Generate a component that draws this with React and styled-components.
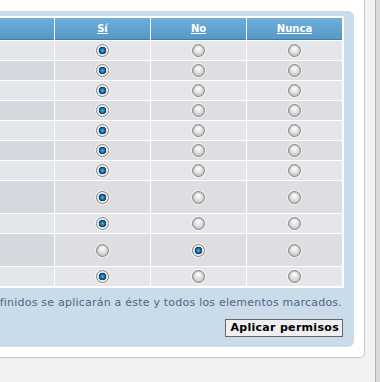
import React from "react";
import styled, { createGlobalStyle } from "styled-components";

const Global = createGlobalStyle`
  html, body { margin: 0; padding: 0; background: #f2f2f2; }
  body { font-family: "DejaVu Sans", Verdana, sans-serif; }
`;

const Page = styled.div`
  display: flex;
  width: 380px;
  height: 382px;
  overflow: hidden;
  background: #f2f2f2;
`;

const Main = styled.div`
  flex: 0 0 375px;
  min-width: 0;
  overflow: hidden;
  display: flex;
  justify-content: flex-end;
  align-items: flex-start;
  padding-right: 10px;
  box-sizing: border-box;
`;

const Edge = styled.div`
  flex: 1;
  border-left: 1px solid #b2b2b2;
  background: #d9d9d9;
`;

const Card = styled.div`
  flex: 0 0 700px;
  box-sizing: border-box;
  background: #ffffff;
  padding: 11px 10px 10px 0;
  border-right: 1px solid #c6c6c6;
  border-bottom: 1px solid #c6c6c6;
  border-bottom-right-radius: 5px;
`;

const Panel = styled.div`
  background: #cadbea;
  border-radius: 6px;
  padding: 5px 10px 10px 10px;
`;

const Table = styled.table`
  width: 100%;
  border-collapse: separate;
  border-spacing: 1px;
  border: 1px solid #ffffff;
  background: #ffffff;
  table-layout: fixed;
`;

const Th = styled.th`
  height: 21px;
  padding: 0;
  background: linear-gradient(#6eaed8, #5898c8);
  border-bottom: 1px solid #3f7cab;
  color: #ffffff;
  font-size: 10px;
  font-weight: bold;
  text-align: center;
  width: ${(p) => (p.$wide ? "auto" : "95px")};
`;

const HeadLink = styled.a`
  color: #ffffff;
  text-decoration: underline;
`;

const Label = styled.td`
  padding: 0;
  height: ${(p) => (p.$tall ? "32px" : "19px")};
  background: ${(p) => (p.$odd ? "#e4e7ea" : "#d4d9df")};
`;

const Cell = styled.td`
  padding: 0;
  text-align: center;
  vertical-align: middle;
  line-height: 0;
  background: ${(p) => (p.$odd ? "#e4e6e9" : "#dcdee1")};
`;

const Radio = styled.input.attrs({ type: "radio" })`
  appearance: none;
  -webkit-appearance: none;
  margin: 0;
  width: 13px;
  height: 13px;
  border-radius: 50%;
  box-sizing: border-box;
  border: 1px solid #858585;
  box-shadow: 0 0 0 1px rgba(255, 255, 255, 0.6), inset 0 0 0 1px #c4c4c4;
  background: radial-gradient(circle at 50% 35%, #ffffff 0, #f0f0f0 2px, #cfcfcf 6px);
  vertical-align: middle;

  &:checked {
    box-shadow: 0 0 0 1px rgba(255, 255, 255, 0.6);
    background: radial-gradient(
      circle at 50% 50%,
      #62b8ec 0,
      #2180c2 1.5px,
      #105c96 2.7px,
      #0b3557 3.5px,
      #dcdcdc 4px,
      #fbfbfb 4.8px,
      #cdcdcd 6px
    );
  }
`;

const Quick = styled.div`
  text-align: right;
  color: #536482;
  font-size: 11px;
`;

const Note = styled.p`
  margin: 8px 2px 0 0;
  line-height: 14px;
  letter-spacing: 0.22px;
  white-space: nowrap;
`;

const Button = styled.button`
  margin: 9px 1px 0 0;
  height: 18px;
  padding: 0 3px 0 4px;
  font-family: "DejaVu Sans", Verdana, sans-serif;
  font-size: 11px;
  font-weight: bold;
  letter-spacing: 0.3px;
  color: #000000;
  background: #efefef;
  border: 1px solid #666666;
  border-radius: 0;
  line-height: 14px;
`;

const rows = [
  { tall: false, value: "si" },
  { tall: false, value: "si" },
  { tall: false, value: "si" },
  { tall: false, value: "si" },
  { tall: false, value: "si" },
  { tall: false, value: "si" },
  { tall: false, value: "si" },
  { tall: true, value: "si" },
  { tall: false, value: "si" },
  { tall: true, value: "no" },
  { tall: false, value: "si" },
];

const options = ["si", "no", "nunca"];

export default function App() {
  return (
    <Page>
      <Global />
      <Main>
        <Card>
          <Panel>
            <Table>
              <thead>
                <tr>
                  <Th $wide />
                  <Th><HeadLink href="#">Sí</HeadLink></Th>
                  <Th><HeadLink href="#">No</HeadLink></Th>
                  <Th><HeadLink href="#">Nunca</HeadLink></Th>
                </tr>
              </thead>
              <tbody>
                {rows.map((r, i) => {
                  const odd = i % 2 === 0;
                  return (
                    <tr key={i}>
                      <Label $odd={odd} $tall={r.tall} />
                      {options.map((o) => (
                        <Cell key={o} $odd={odd}>
                          <Radio name={`perm-${i}`} value={o} defaultChecked={r.value === o} />
                        </Cell>
                      ))}
                    </tr>
                  );
                })}
              </tbody>
            </Table>
            <Quick>
              <Note>Los permisos definidos se aplicarán a éste y todos los elementos marcados.</Note>
              <Button type="button">Aplicar permisos</Button>
            </Quick>
          </Panel>
        </Card>
      </Main>
      <Edge />
    </Page>
  );
}
